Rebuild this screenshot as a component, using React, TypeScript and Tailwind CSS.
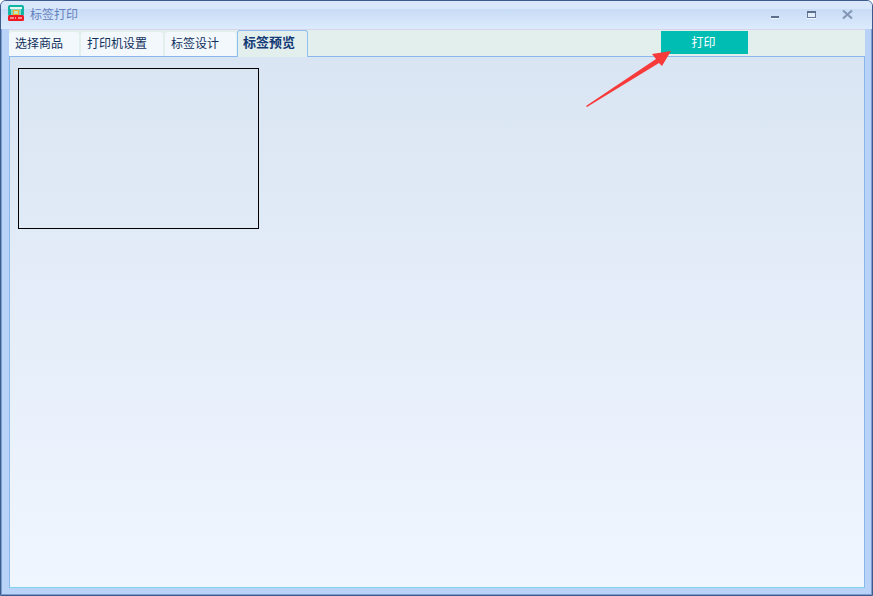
const font = { fontFamily: '"Noto Sans CJK SC", sans-serif' };

const AppIcon = () => (
  <svg width="16" height="16" viewBox="0 0 16 16" className="-mt-[4px] shrink-0">
    <rect x="0" y="0" width="16" height="11" rx="2" fill="#10b4a4" />
    <rect x="0" y="10" width="16" height="6" rx="1.500" fill="#f01822" />
    <rect x="2" y="2" width="12" height="2" fill="#e8f6ee" />
    <rect x="3" y="4" width="10" height="6" fill="#7fd4c4" />
    <rect x="5.500" y="5.500" width="5" height="4" fill="#bfe6b8" stroke="#f0b030" />
    <path d="M2 13h2M5 12v2M7 13h1M10 13h4" stroke="#fff" strokeWidth="1" />
  </svg>
);

const WindowButtons = () => (
  <div className="flex items-center gap-[17px] pr-[15px]">
    <svg width="19" height="12" viewBox="0 0 19 12" className="-mr-[1px]">
      <rect x="4" y="7" width="8" height="2" fill="#5c6f8a" />
      <rect x="4" y="9" width="8" height="1" fill="#f2f7fe" />
    </svg>
    <svg width="19" height="12" viewBox="0 0 19 12">
      <rect x="5.500" y="2.500" width="8" height="6" fill="#e4edfa" stroke="#66799a" />
      <rect x="5" y="2" width="9" height="2" fill="#5c6f8a" />
      <rect x="5" y="9" width="9" height="1" fill="#f2f7fe" />
    </svg>
    <svg width="19" height="12" viewBox="0 0 19 12">
      <path d="M5 1.500 L14 9.500 M14 1.500 L5 9.500" stroke="#8497b5" strokeWidth="2.200" />
    </svg>
  </div>
);

const Tab = ({ label, width }: { label: string; width: string }) => (
  <div className={`${width} h-[24px] rounded-t-[3px] bg-[#f3f8fc] pl-[6px] text-[12px] leading-[21px] text-[#10305c]`}>
    {label}
  </div>
);

export default function App() {
  return (
    <div
      style={font}
      className="relative flex h-[596px] w-[873px] flex-col overflow-hidden rounded-t-[6px] border border-[#3b5c8c] bg-[#b9d3f8]"
    >
      <div className="flex h-[28px] shrink-0 items-center justify-between bg-[linear-gradient(to_bottom,#dbe8fb_0%,#d9e7fb_28%,#c9dcf6_30%,#dcebfd_100%)]">
        <div className="flex items-center gap-[6px] pl-[7px]">
          <AppIcon />
          <span className="-mt-[2px] text-[12px] text-[#6480bc]">标签打印</span>
        </div>
        <WindowButtons />
      </div>

      <div className="flex min-h-0 flex-1 flex-col border-x border-b border-[#7d9ccf] pb-[6px] pl-[7px] pr-[6px]">
        <div className="flex h-[27px] shrink-0 items-end gap-[2px] border-t border-[#d8d2ea] bg-[#e2efec]">
          <Tab label="选择商品" width="w-[70px]" />
          <Tab label="打印机设置" width="w-[82px]" />
          <Tab label="标签设计" width="w-[71px]" />
          <div className="relative -mb-[1px] -ml-[1px] h-[27px] w-[71px] rounded-t-[3px] border border-b-0 border-[#90c0f0] bg-[#e2efec] pl-[5px] text-[13px] font-bold leading-[22px] text-[#123a76]">
            标签预览
          </div>
          <div className="mb-[2px] ml-auto mr-[117px] h-[23px] w-[87px] bg-[#00bdb4] pr-[2px] text-center text-[12px] leading-[21px] text-white">
            打印
          </div>
        </div>

        <div className="flex-1 border border-[#8ab8ea] border-b-[#7ed4ec] bg-gradient-to-b from-[#dae5f3] to-[#f0f6ff] pl-[8px] pt-[11px]">
          <div className="h-[161px] w-[241px] border border-black" />
        </div>
      </div>

      <svg width="100" height="70" viewBox="0 0 100 70" className="absolute left-[580px] top-[43px]">
        <path d="M5 62 L75 15 L71 10 L90 7 L81 22 L78 19 L6 63 Z" fill="#f73b3b" />
      </svg>
    </div>
  );
}
